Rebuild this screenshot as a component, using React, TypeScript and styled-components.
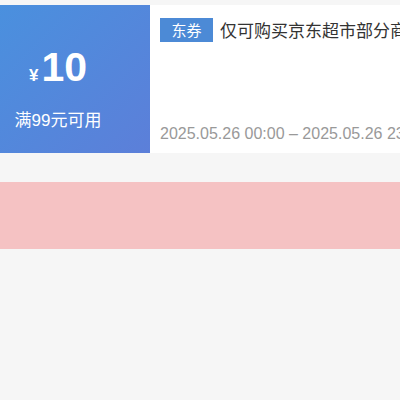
import React, {FC} from 'react';
import styled, {createGlobalStyle} from 'styled-components';

const GlobalStyle = createGlobalStyle`
  html, body {
    margin: 0;
    padding: 0;
    background-color: #f6f6f6;
    font-family: "Liberation Sans", "Noto Sans CJK SC", sans-serif;
    overflow: hidden;
  }
`;

const Page = styled.div`
  display: flex;
  flex-direction: column;
  width: 400px;
  height: 400px;
  padding-top: 5px;
  box-sizing: border-box;
  overflow: hidden;
`;

const Coupon = styled.div`
  display: flex;
  flex-direction: row;
  height: 148px;
  background-color: #ffffff;
`;

const Value = styled.div`
  display: flex;
  flex-direction: column;
  align-items: center;
  flex: 0 0 150px;
  box-sizing: border-box;
  padding-right: 34px;
  background: linear-gradient(135deg, #4a90de 0%, #5c7fd9 100%);
  color: #ffffff;
`;

const Amount = styled.div`
  display: flex;
  align-items: baseline;
  margin-top: 40px;
  height: 44px;
`;

const Yen = styled.span`
  font-size: 17px;
  font-weight: bold;
  margin-right: 3px;
`;

const Number = styled.span`
  font-size: 41px;
  font-weight: bold;
  line-height: 44px;
`;

const Limit = styled.div`
  margin-top: 17px;
  font-size: 17px;
`;

const Info = styled.div`
  display: flex;
  flex-direction: column;
  justify-content: space-between;
  flex: 1 0 auto;
  padding: 12px 0 10px 10px;
  white-space: nowrap;
`;

const TitleRow = styled.div`
  display: flex;
  align-items: center;
  gap: 7px;
`;

const Tag = styled.span`
  display: inline-flex;
  align-items: center;
  justify-content: center;
  flex-shrink: 0;
  width: 53px;
  height: 24px;
  background-color: #4c8ad6;
  color: #ffffff;
  font-size: 15px;
`;

const Title = styled.span`
  font-size: 17px;
  color: #333333;
`;

const Period = styled.div`
  font-size: 16px;
  color: #999999;
`;

const Band = styled.div`
  flex-shrink: 0;
  height: 67px;
  margin-top: 29px;
  background-color: #f5c2c3;
`;

const CouponCard: FC = () => (
  <Coupon>
    <Value>
      <Amount>
        <Yen>¥</Yen>
        <Number>10</Number>
      </Amount>
      <Limit>满99元可用</Limit>
    </Value>
    <Info>
      <TitleRow>
        <Tag>东券</Tag>
        <Title>仅可购买京东超市部分商品</Title>
      </TitleRow>
      <Period>2025.05.26 00:00 – 2025.05.26 23:59</Period>
    </Info>
  </Coupon>
);

const App: FC = () => (
  <>
    <GlobalStyle />
    <Page>
      <CouponCard />
      <Band />
    </Page>
  </>
);

export default App;
